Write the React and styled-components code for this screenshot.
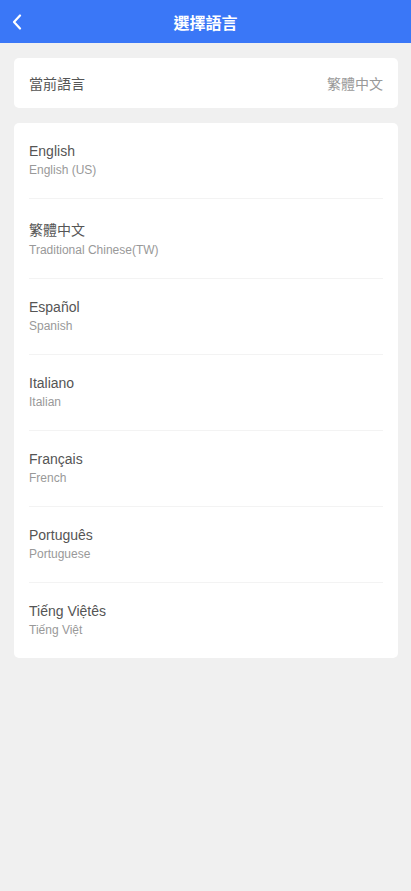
import styled, { createGlobalStyle } from 'styled-components';

const GlobalStyle = createGlobalStyle`
  html, body {
    margin: 0;
    padding: 0;
    background-color: #f0f0f0;
    font-family: 'Liberation Sans', Arial, 'Noto Sans CJK TC', sans-serif;
  }
`;

const Page = styled.div`
  width: 100%;
  min-height: 891px;
  background-color: #f0f0f0;
  display: flex;
  flex-direction: column;
`;

const Header = styled.header`
  height: 43px;
  background-color: #3a77f7;
  display: flex;
  align-items: center;
  justify-content: center;
  position: relative;
  color: #fff;
`;

const BackButton = styled.button`
  position: absolute;
  left: 5px;
  top: 0;
  height: 43px;
  width: 24px;
  border: none;
  background: none;
  padding: 0;
  display: flex;
  align-items: center;
  justify-content: center;
  cursor: pointer;
`;

const HeaderTitle = styled.h1`
  margin: 0;
  font-size: 16px;
  font-weight: bold;
  font-family: 'Liberation Sans', 'Noto Sans CJK TC', sans-serif;
`;

const Card = styled.div`
  margin: ${props => props.margin};
  background-color: #fff;
  border-radius: 5px;
  padding: 0 15px;
`;

const CurrentRow = styled.div`
  height: 50px;
  display: flex;
  align-items: center;
  justify-content: space-between;
  font-size: 14px;
`;

const Label = styled.span`
  color: #555;
`;

const Value = styled.span`
  color: #999;
`;

const LangItem = styled.div`
  padding: 20px 0 21px;
  display: flex;
  flex-direction: column;
  border-bottom: ${props => (props.last ? 'none' : '1px solid #f3f3f3')};
  cursor: pointer;
`;

const LangName = styled.span`
  font-size: 14px;
  color: #555;
`;

const LangSub = styled.span`
  margin-top: 4px;
  font-size: 12px;
  color: #999;
`;

const languages = [
  { name: 'English', sub: 'English (US)' },
  { name: '繁體中文', sub: 'Traditional Chinese(TW)' },
  { name: 'Español', sub: 'Spanish' },
  { name: 'Italiano', sub: 'Italian' },
  { name: 'Français', sub: 'French' },
  { name: 'Português', sub: 'Portuguese' },
  { name: 'Tiếng Việtês', sub: 'Tiếng Việt' },
];

const App = () => {
  return (
    <Page>
      <GlobalStyle />
      <Header>
        <BackButton aria-label='back'>
          <svg width='12' height='16' viewBox='0 0 12 16'>
            <path
              d='M9 1.5 L3 8 L9 14.5'
              fill='none'
              stroke='#fff'
              strokeWidth='2.2'
              strokeLinecap='round'
              strokeLinejoin='round'
            />
          </svg>
        </BackButton>
        <HeaderTitle>選擇語言</HeaderTitle>
      </Header>
      <Card margin='15px 13px 0 14px'>
        <CurrentRow>
          <Label>當前語言</Label>
          <Value>繁體中文</Value>
        </CurrentRow>
      </Card>
      <Card margin='15px 13px 0 14px'>
        {languages.map((lang, i) => (
          <LangItem key={lang.name} last={i === languages.length - 1}>
            <LangName>{lang.name}</LangName>
            <LangSub>{lang.sub}</LangSub>
          </LangItem>
        ))}
      </Card>
    </Page>
  );
};

export default App;
